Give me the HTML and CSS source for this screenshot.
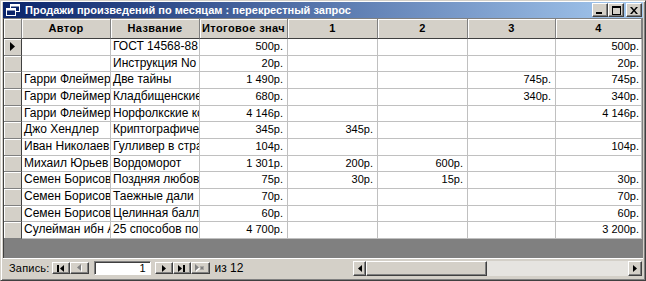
FILE: index.html
```html
<!DOCTYPE html>
<html lang="ru">
<head>
    <meta charset="UTF-8">
    <title>Продажи произведений по месяцам : перекрестный запрос</title>
    <link rel="stylesheet" href="styles.css">
</head>
<body>
    <div class="window">
        <!-- Заголовок окна -->
        <div class="titlebar">
            <svg class="title-icon" width="14" height="12" viewBox="0 0 14 12">
                <rect x="4.5" y="0.5" width="9" height="7" fill="#0a246a" stroke="#fff"/>
                <rect x="4.5" y="0.5" width="9" height="2" fill="#fff"/>
                <rect x="0.5" y="4.5" width="9" height="7" fill="#0a246a" stroke="#fff"/>
                <rect x="0.5" y="4.5" width="9" height="2" fill="#fff"/>
            </svg>
            <span class="title-text">Продажи произведений по месяцам : перекрестный запрос</span>
            <div class="title-buttons">
                <div class="tbtn">
                    <svg width="8" height="8" viewBox="0 0 8 8"><rect x="0" y="6" width="6" height="2" fill="#000"/></svg>
                </div>
                <div class="tbtn">
                    <svg width="9" height="9" viewBox="0 0 9 9"><rect x="0.5" y="0.5" width="8" height="8" fill="none" stroke="#000"/><rect x="0" y="0" width="9" height="2" fill="#000"/></svg>
                </div>
                <div class="tbtn close">
                    <svg width="8" height="7" viewBox="0 0 8 7"><path d="M0 0h2l2 2.5L6 0h2L5 3.5 8 7H6L4 4.5 2 7H0l3-3.5z" fill="#000"/></svg>
                </div>
            </div>
        </div>

        <!-- Таблица -->
        <div class="sheet">
            <div class="row head">
                <div class="cell sel"></div>
                <div class="cell">Автор</div>
                <div class="cell">Название</div>
                <div class="cell">Итоговое знач</div>
                <div class="cell">1</div>
                <div class="cell">2</div>
                <div class="cell">3</div>
                <div class="cell">4</div>
            </div>
            <div class="row">
                <div class="cell sel">
                    <svg width="6" height="9" viewBox="0 0 6 9"><path d="M0 0l5 4.5L0 9z" fill="#000"/></svg>
                </div>
                <div class="cell"></div>
                <div class="cell">ГОСТ 14568-88</div>
                <div class="cell num">500р.</div>
                <div class="cell num"></div>
                <div class="cell num"></div>
                <div class="cell num"></div>
                <div class="cell num">500р.</div>
            </div>
            <div class="row">
                <div class="cell sel"></div>
                <div class="cell"></div>
                <div class="cell">Инструкция No</div>
                <div class="cell num">20р.</div>
                <div class="cell num"></div>
                <div class="cell num"></div>
                <div class="cell num"></div>
                <div class="cell num">20р.</div>
            </div>
            <div class="row">
                <div class="cell sel"></div>
                <div class="cell">Гарри Флеймер</div>
                <div class="cell">Две тайны</div>
                <div class="cell num">1 490р.</div>
                <div class="cell num"></div>
                <div class="cell num"></div>
                <div class="cell num">745р.</div>
                <div class="cell num">745р.</div>
            </div>
            <div class="row">
                <div class="cell sel"></div>
                <div class="cell">Гарри Флеймер</div>
                <div class="cell">Кладбищенские</div>
                <div class="cell num">680р.</div>
                <div class="cell num"></div>
                <div class="cell num"></div>
                <div class="cell num">340р.</div>
                <div class="cell num">340р.</div>
            </div>
            <div class="row">
                <div class="cell sel"></div>
                <div class="cell">Гарри Флеймер</div>
                <div class="cell">Норфолкские ко</div>
                <div class="cell num">4 146р.</div>
                <div class="cell num"></div>
                <div class="cell num"></div>
                <div class="cell num"></div>
                <div class="cell num">4 146р.</div>
            </div>
            <div class="row">
                <div class="cell sel"></div>
                <div class="cell">Джо Хендлер</div>
                <div class="cell">Криптографичес</div>
                <div class="cell num">345р.</div>
                <div class="cell num">345р.</div>
                <div class="cell num"></div>
                <div class="cell num"></div>
                <div class="cell num"></div>
            </div>
            <div class="row">
                <div class="cell sel"></div>
                <div class="cell">Иван Николаев</div>
                <div class="cell">Гулливер в стра</div>
                <div class="cell num">104р.</div>
                <div class="cell num"></div>
                <div class="cell num"></div>
                <div class="cell num"></div>
                <div class="cell num">104р.</div>
            </div>
            <div class="row">
                <div class="cell sel"></div>
                <div class="cell">Михаил Юрьев</div>
                <div class="cell">Вордоморот</div>
                <div class="cell num">1 301р.</div>
                <div class="cell num">200р.</div>
                <div class="cell num">600р.</div>
                <div class="cell num"></div>
                <div class="cell num"></div>
            </div>
            <div class="row">
                <div class="cell sel"></div>
                <div class="cell">Семен Борисов</div>
                <div class="cell">Поздняя любовь</div>
                <div class="cell num">75р.</div>
                <div class="cell num">30р.</div>
                <div class="cell num">15р.</div>
                <div class="cell num"></div>
                <div class="cell num">30р.</div>
            </div>
            <div class="row">
                <div class="cell sel"></div>
                <div class="cell">Семен Борисов</div>
                <div class="cell">Таежные дали</div>
                <div class="cell num">70р.</div>
                <div class="cell num"></div>
                <div class="cell num"></div>
                <div class="cell num"></div>
                <div class="cell num">70р.</div>
            </div>
            <div class="row">
                <div class="cell sel"></div>
                <div class="cell">Семен Борисов</div>
                <div class="cell">Целинная балла</div>
                <div class="cell num">60р.</div>
                <div class="cell num"></div>
                <div class="cell num"></div>
                <div class="cell num"></div>
                <div class="cell num">60р.</div>
            </div>
            <div class="row">
                <div class="cell sel"></div>
                <div class="cell">Сулейман ибн А</div>
                <div class="cell">25 способов по</div>
                <div class="cell num">4 700р.</div>
                <div class="cell num"></div>
                <div class="cell num"></div>
                <div class="cell num"></div>
                <div class="cell num">3 200р.</div>
            </div>
        </div>

        <!-- Навигация по записям -->
        <div class="navbar">
            <span class="nav-label">Запись:</span>
            <div class="nbtn">
                <svg width="7" height="7" viewBox="0 0 7 7"><rect x="0" y="0" width="2" height="7" fill="#000"/><path d="M7 0v7L3 3.5z" fill="#000"/></svg>
            </div>
            <div class="nbtn wide">
                <svg width="5" height="8" viewBox="0 0 5 8"><path d="M5 1v7L1 4.5z" fill="#fff"/><path d="M4 0v7L0 3.5z" fill="#808080"/></svg>
            </div>
            <div class="recno">1</div>
            <div class="nbtn">
                <svg width="4" height="7" viewBox="0 0 4 7"><path d="M0 0v7l4-3.5z" fill="#000"/></svg>
            </div>
            <div class="nbtn">
                <svg width="7" height="7" viewBox="0 0 7 7"><path d="M0 0v7l4-3.5z" fill="#000"/><rect x="5" y="0" width="2" height="7" fill="#000"/></svg>
            </div>
            <div class="nbtn wide">
                <svg width="10" height="8" viewBox="0 0 10 8"><path d="M1 1v7l4-3.5z" fill="#fff"/><path d="M0 0v7l4-3.5z" fill="#808080"/><path d="M7 2v4M5 4h4M5.5 2.5l3 3M8.5 2.5l-3 3" stroke="#808080" stroke-width="1"/></svg>
            </div>
            <span class="nav-count">из 12</span>

            <div class="hscroll">
                <div class="sbtn left">
                    <svg width="4" height="7" viewBox="0 0 4 7"><path d="M4 0v7L0 3.5z" fill="#000"/></svg>
                </div>
                <div class="thumb"></div>
                <div class="track"></div>
                <div class="sbtn right">
                    <svg width="4" height="7" viewBox="0 0 4 7"><path d="M0 0v7l4-3.5z" fill="#000"/></svg>
                </div>
            </div>
        </div>
    </div>
</body>
</html>
```

FILE: styles.css
```css
body {
    margin: 0;
    font-family: 'Liberation Sans', Arial, sans-serif;
    font-size: 11px;
    color: #000;
    background: #fff;
}

.window {
    width: 646px;
    height: 281px;
    box-sizing: border-box;
    display: flex;
    flex-direction: column;
    background: #d4d0c8;
    border: 1px solid;
    border-color: #d4d0c8 #404040 #404040 #d4d0c8;
    box-shadow: inset 1px 1px #fff, inset -1px -1px #808080;
    padding: 1px 2px 3px 2px;
}

/* Заголовок */
.titlebar {
    height: 16px;
    flex-shrink: 0;
    display: flex;
    align-items: center;
    background: linear-gradient(to right, #0a246a, #a6caf0);
    color: #fff;
    font-weight: bold;
    font-size: 11px;
    padding-left: 3px;
}

.title-icon {
    margin-right: 5px;
}

.title-buttons {
    margin-left: auto;
    display: flex;
    margin-right: 1px;
}

.tbtn {
    width: 16px;
    height: 14px;
    box-sizing: border-box;
    background: #d4d0c8;
    border: 1px solid;
    border-color: #fff #404040 #404040 #fff;
    box-shadow: inset -1px -1px #808080;
    display: flex;
    align-items: center;
    justify-content: center;
}

.tbtn.close {
    margin-left: 2px;
}

/* Таблица */
.sheet {
    flex: 1;
    background: #808080;
    border-left: 1px solid #404040;
    border-top: 1px solid #808080;
}

.row {
    display: grid;
    grid-template-columns: 18px 89px 89px 88px 90px 90px 88px 86px;
    height: 16.67px;
}

.cell {
    box-sizing: border-box;
    background: #fff;
    border-right: 1px solid #c0c0c0;
    border-bottom: 1px solid #c0c0c0;
    padding: 0 2px;
    font-size: 12px;
    line-height: 15px;
    white-space: nowrap;
    overflow: hidden;
}

.cell.num {
    font-size: 11px;
    text-align: right;
    padding-right: 4px;
}

.row .cell:last-child.num {
    padding-right: 2px;
}

.cell.sel {
    background: #d4d0c8;
    border-right: 1px solid #404040;
    border-bottom: 1px solid #808080;
    box-shadow: inset 1px 1px #fff;
    padding: 0;
    display: flex;
    align-items: center;
    justify-content: center;
}

.row.head {
    height: 20px;
}

.head .cell {
    background: #d4d0c8;
    border-right: 1px solid #808080;
    border-bottom: 1px solid #404040;
    box-shadow: inset 1px 1px #fff;
    font-size: 11px;
    font-weight: bold;
    text-align: center;
    line-height: 19px;
    letter-spacing: 0.4px;
}

/* Навигация */
.navbar {
    height: 19px;
    flex-shrink: 0;
    box-sizing: border-box;
    border-top: 1px solid #fff;
    display: flex;
    align-items: center;
}

.nav-label {
    margin-left: 6px;
    margin-right: 2px;
    letter-spacing: 0.2px;
}

.nbtn {
    width: 18px;
    height: 12px;
    box-sizing: border-box;
    border: 1px solid;
    border-color: #fff #404040 #404040 #fff;
    box-shadow: inset -1px -1px #808080;
    display: flex;
    align-items: center;
    justify-content: center;
}

.nbtn.wide {
    width: 19px;
}

.recno {
    width: 57px;
    height: 14px;
    box-sizing: border-box;
    background: #fff;
    border: 1px solid;
    border-color: #808080 #fff #fff #808080;
    box-shadow: inset 1px 1px #404040;
    text-align: right;
    padding-right: 4px;
    line-height: 12px;
    margin: 0 4px 0 5px;
}

.nav-count {
    margin-left: 5px;
    font-size: 12px;
}

.hscroll {
    margin-left: auto;
    margin-right: 1px;
    width: 289px;
    height: 15px;
    display: flex;
}

.sbtn {
    box-sizing: border-box;
    height: 15px;
    background: #d4d0c8;
    border: 1px solid;
    border-color: #fff #404040 #404040 #fff;
    box-shadow: inset -1px -1px #808080;
    display: flex;
    align-items: center;
    justify-content: center;
}

.sbtn.left {
    width: 13px;
}

.sbtn.right {
    width: 14px;
}

.thumb {
    width: 121px;
    box-sizing: border-box;
    background: #d4d0c8;
    border: 1px solid;
    border-color: #fff #404040 #404040 #fff;
    box-shadow: inset -1px -1px #808080;
}

.track {
    flex: 1;
    background: #e6e4e0;
}
```
